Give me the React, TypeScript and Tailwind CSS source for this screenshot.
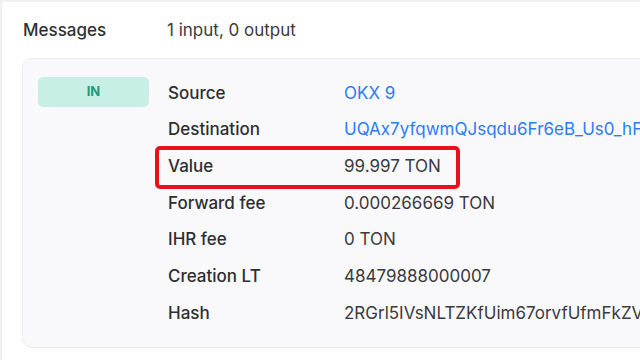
import React from "react";

const rows: { label: string; value: string; link?: boolean; boxed?: boolean }[] = [
  { label: "Source", value: "OKX 9", link: true },
  { label: "Destination", value: "UQAx7yfqwmQJsqdu6Fr6eB_Us0_hFq2xKp9VmTnE7cDs", link: true },
  { label: "Value", value: "99.997 TON", boxed: true },
  { label: "Forward fee", value: "0.000266669 TON" },
  { label: "IHR fee", value: "0 TON" },
  { label: "Creation LT", value: "48479888000007" },
  { label: "Hash", value: "2RGrl5IVsNLTZKfUim67orvfUfmFkZVx1qQ3wPb8sT0=" },
];

const App = () => {
  return (
    <div
      className="relative w-[640px] h-[360px] overflow-hidden bg-white border-l-2 border-t-2 border-[#eef0f3] text-[#2c2c2e]"
      style={{ fontFamily: "Inter, 'Noto Sans', sans-serif" }}
    >
      <div className="flex items-center h-[56px] pt-[2px] pl-[21px] text-[17px]">
        <div className="w-[144px] font-medium text-[#303033]">Messages</div>
        <div className="text-[#3a3a3c]">1 input, 0 output</div>
      </div>

      <div className="ml-[20px] w-[660px] rounded-[10px] border border-[#ececf0] bg-[#f9f9fb] pl-[15px] pt-[16px] pb-[15px] flex gap-[19px]">
        <div className="mt-[2px] w-[111px] h-[30px] shrink-0 rounded-[5px] bg-[#c8efe6] flex items-center justify-center text-[13px] font-bold text-[#1e9a72]">
          IN
        </div>
        <div className="flex flex-col">
          {rows.map((r) => (
            <div key={r.label} className="relative flex items-center h-[36.7px] text-[17px] whitespace-nowrap">
              <div className="w-[176px] font-medium text-[#2e2e31]">{r.label}</div>
              <div className={r.link ? "text-[#2d7cf2]" : "text-[#3a3a3c]"}>{r.value}</div>
              {r.boxed && (
                <div className="absolute left-[-13px] top-[-2px] w-[305px] h-[43px] rounded-[5px] border-[4px] border-[#e8101a]" />
              )}
            </div>
          ))}
        </div>
      </div>
    </div>
  );
};

export default App;
